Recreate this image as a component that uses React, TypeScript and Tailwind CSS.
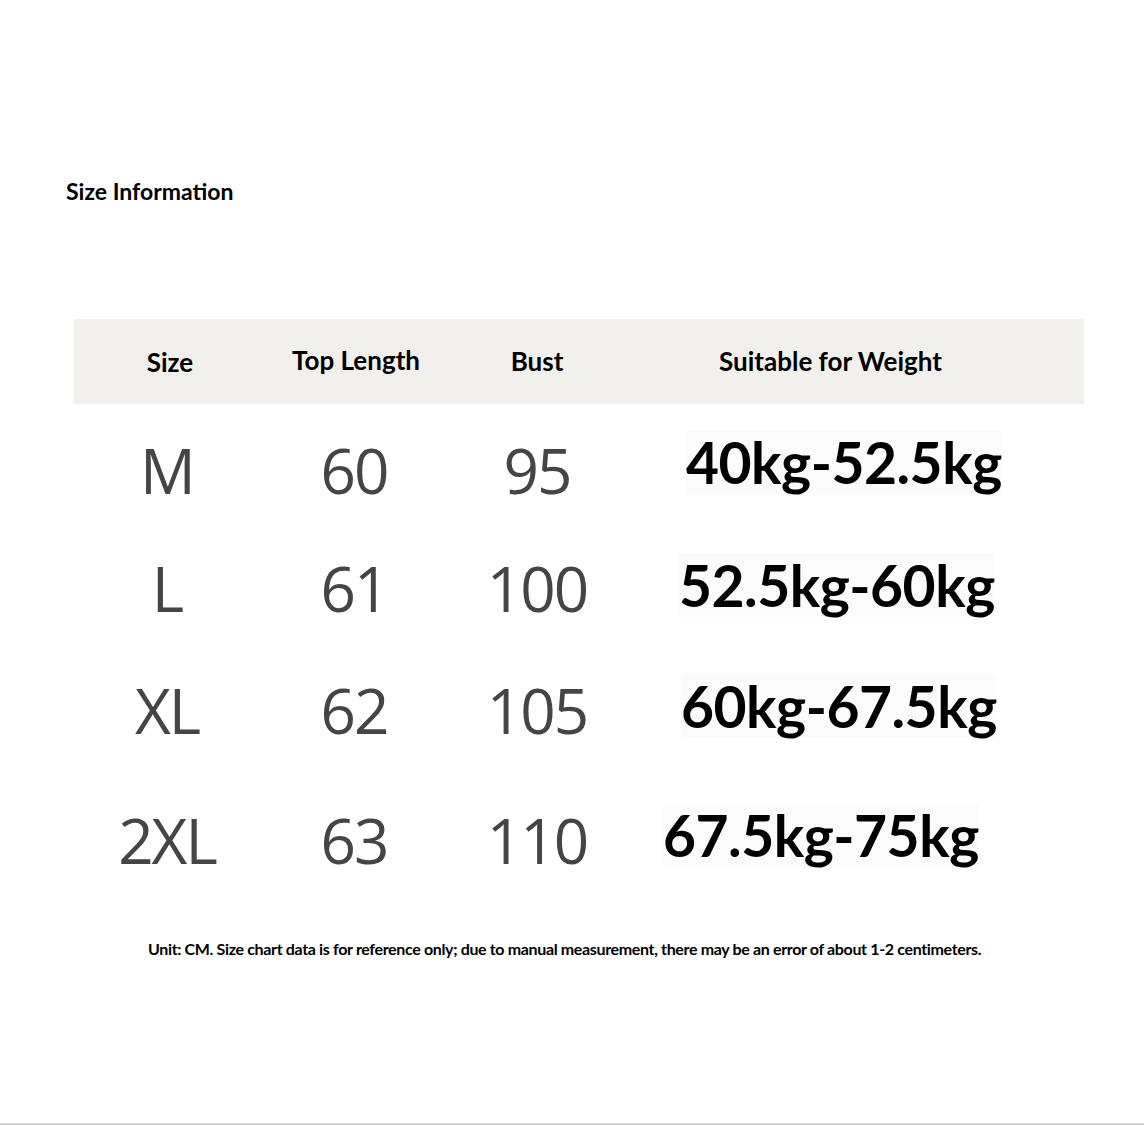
const rows = [
  { size: 'M', length: '60', bust: '95', weight: '40kg-52.5kg', top: 'mt-[16px]', shift: 'pl-[58px]', lift: 'mb-[16px]' },
  { size: 'L', length: '61', bust: '100', weight: '52.5kg-60kg', top: 'mt-[18px]', shift: 'pl-[51px]', lift: 'mb-[6px]' },
  { size: 'XL', length: '62', bust: '105', weight: '60kg-67.5kg', top: 'mt-[22px]', shift: 'pl-[53px]', lift: 'mb-[8px]' },
  { size: '2XL', length: '63', bust: '110', weight: '67.5kg-75kg', top: 'mt-[30px]', shift: 'pl-[35px]', lift: 'mb-[10px]' },
];

const App = () => {
  return (
    <div className="w-[1144px] h-[1125px] bg-white flex flex-col font-['Lato',sans-serif]">
      <h1 className="ml-[66px] mt-[177px] text-[23px] leading-[28px] font-bold text-black">Size Information</h1>

      <div className="ml-[74px] w-[1010px] mt-[114px]">
        <div className="h-[85px] bg-[#f2f0ec] grid grid-cols-[192px_180px_182px_1fr] items-center text-[26px] font-bold text-black">
          <div className="text-center mt-[2px]">Size</div>
          <div className="text-center mt-[-2px]">Top Length</div>
          <div className="text-center">Bust</div>
          <div className="pl-[91px]">Suitable for Weight</div>
        </div>

        {rows.map((r) => (
          <div key={r.size} className={`grid grid-cols-[192px_180px_182px_1fr] h-[100px] items-center ${r.top}`}>
            <div className="text-center text-[62px] text-[#454545] font-medium font-['Open_Sans',sans-serif] tracking-[-2px] pr-[6px]">{r.size}</div>
            <div className="text-center text-[62px] text-[#454545] font-medium font-['Open_Sans',sans-serif] tracking-[-2px] pr-[4px]">{r.length}</div>
            <div className="text-center text-[62px] text-[#454545] font-medium font-['Open_Sans',sans-serif] tracking-[-2px]">{r.bust}</div>
            <div className={`${r.shift} ${r.lift}`}>
              <span className="inline-block bg-[#fbfbfb] text-[57px] leading-[64px] font-bold text-black tracking-[-0.5px]">{r.weight}</span>
            </div>
          </div>
        ))}
      </div>

      <p className="mt-[47px] ml-[148px] text-[16px] font-bold text-black tracking-[-0.35px]">
        Unit: CM. Size chart data is for reference only; due to manual measurement, there may be an error of about 1-2 centimeters.
      </p>

      <div className="mt-auto h-[2px] bg-[#d4d4d4]" />
    </div>
  );
};

export default App;
